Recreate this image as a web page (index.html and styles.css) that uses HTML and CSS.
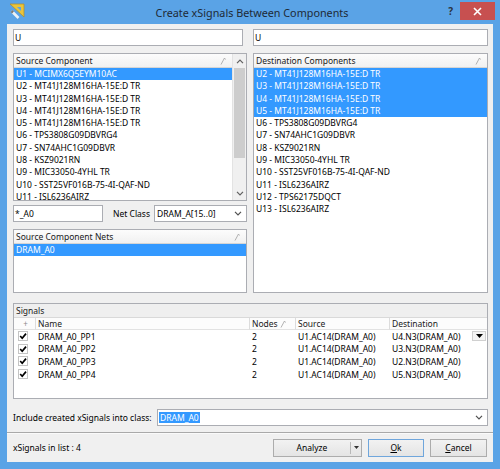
FILE: index.html
```html
<!DOCTYPE html>
<html>
<head>
<meta charset="utf-8">
<link rel="stylesheet" href="styles.css">
</head>
<body>
<div class="window">
  <div class="titlebar">
    <div class="tb-left">
      <svg class="appicon" width="16" height="17" viewBox="0 0 16 17">
        <polygon points="1,1 15,1 15,14" fill="#e9c43c" stroke="#b38c22" stroke-width="0.7"/>
        <polygon points="8,4 12,4 12,8" fill="#5aa3e6"/>
        <line x1="2.5" y1="8" x2="9.5" y2="15" stroke="#eef2f6" stroke-width="2.6"/>
        <line x1="2.5" y1="8" x2="4" y2="9.5" stroke="#7a7a7a" stroke-width="2.6"/>
      </svg>
    </div>
    <div class="title">Create xSignals Between Components</div>
    <div class="tb-right">
      <span class="help">?</span>
      <span class="close">
        <svg width="9" height="9" viewBox="0 0 9 9"><path d="M1 1 L8 8 M8 1 L1 8" stroke="#fff" stroke-width="1.6"/></svg>
      </span>
    </div>
  </div>
  <div class="client">
    <div class="main">
      <div class="toprow">
        <div class="edit">U</div>
        <div class="edit">U</div>
      </div>
      <div class="panels">
        <div class="leftcol">
          <div class="listbox src">
            <div class="lb-main">
              <div class="lb-hdr"><span>Source Component</span><svg class="sort" width="6" height="8" viewBox="0 0 6 8"><path d="M1 7.5 L4.5 1 L5.5 2.5" stroke="#a8a8a8" stroke-width="0.9" fill="none"/></svg></div>
              <div class="lb-rows">
                <div class="row sel">U1 - MCIMX6Q5EYM10AC</div>
                <div class="row">U2 - MT41J128M16HA-15E:D TR</div>
                <div class="row">U3 - MT41J128M16HA-15E:D TR</div>
                <div class="row">U4 - MT41J128M16HA-15E:D TR</div>
                <div class="row">U5 - MT41J128M16HA-15E:D TR</div>
                <div class="row">U6 - TPS3808G09DBVRG4</div>
                <div class="row">U7 - SN74AHC1G09DBVR</div>
                <div class="row">U8 - KSZ9021RN</div>
                <div class="row">U9 - MIC33050-4YHL TR</div>
                <div class="row">U10 - SST25VF016B-75-4I-QAF-ND</div>
                <div class="row">U11 - ISL6236AIRZ</div>
              </div>
            </div>
            <div class="vscroll">
              <div class="sb-btn"><svg width="8" height="5" viewBox="0 0 8 5"><path d="M1 4.2 L4 1.2 L7 4.2" stroke="#606060" stroke-width="1.2" fill="none"/></svg></div>
              <div class="sb-thumb"></div>
              <div class="sb-track"></div>
              <div class="sb-btn"><svg width="8" height="5" viewBox="0 0 8 5"><path d="M1 0.8 L4 3.8 L7 0.8" stroke="#606060" stroke-width="1.2" fill="none"/></svg></div>
            </div>
          </div>
          <div class="filterrow">
            <div class="edit filter">*_A0</div>
            <span class="lbl">Net Class</span>
            <div class="combo nc"><span>DRAM_A[15..0]</span><svg width="8" height="5" viewBox="0 0 8 5"><path d="M1 0.8 L4 3.8 L7 0.8" stroke="#505050" stroke-width="1.2" fill="none"/></svg></div>
          </div>
          <div class="listbox nets">
            <div class="lb-main">
              <div class="lb-hdr"><span>Source Component Nets</span><svg class="sort" width="6" height="8" viewBox="0 0 6 8"><path d="M1 7.5 L4.5 1 L5.5 2.5" stroke="#a8a8a8" stroke-width="0.9" fill="none"/></svg></div>
              <div class="lb-rows">
                <div class="row sel">DRAM_A0</div>
              </div>
            </div>
          </div>
        </div>
        <div class="listbox dest">
          <div class="lb-main">
            <div class="lb-hdr"><span>Destination Components</span><svg class="sort" width="6" height="8" viewBox="0 0 6 8"><path d="M1 7.5 L4.5 1 L5.5 2.5" stroke="#a8a8a8" stroke-width="0.9" fill="none"/></svg></div>
            <div class="lb-rows">
              <div class="row sel">U2 - MT41J128M16HA-15E:D TR</div>
              <div class="row sel">U3 - MT41J128M16HA-15E:D TR</div>
              <div class="row sel">U4 - MT41J128M16HA-15E:D TR</div>
              <div class="row sel">U5 - MT41J128M16HA-15E:D TR</div>
              <div class="row">U6 - TPS3808G09DBVRG4</div>
              <div class="row">U7 - SN74AHC1G09DBVR</div>
              <div class="row">U8 - KSZ9021RN</div>
              <div class="row">U9 - MIC33050-4YHL TR</div>
              <div class="row">U10 - SST25VF016B-75-4I-QAF-ND</div>
              <div class="row">U11 - ISL6236AIRZ</div>
              <div class="row">U12 - TPS62175DQCT</div>
              <div class="row">U13 - ISL6236AIRZ</div>
            </div>
          </div>
        </div>
      </div>
      <div class="signals">
        <div class="sg-title">Signals</div>
        <div class="sg-table">
          <div class="th c-chk">+</div>
          <div class="th">Name</div>
          <div class="th"><span>Nodes</span><svg class="sort" width="6" height="8" viewBox="0 0 6 8"><path d="M1 7.5 L4.5 1 L5.5 2.5" stroke="#a8a8a8" stroke-width="0.9" fill="none"/></svg></div>
          <div class="th">Source</div>
          <div class="th">Destination</div>

          <div class="td c-chk"><svg class="chk" width="10" height="10" viewBox="0 0 10 10"><rect x="0.5" y="0.5" width="9" height="9" fill="#fff" stroke="#c4c4c4"/><path d="M2.2 5 L4.2 7.2 L8 2.6" stroke="#000" stroke-width="1.7" fill="none"/></svg></div>
          <div class="td">DRAM_A0_PP1</div>
          <div class="td">2</div>
          <div class="td">U1.AC14(DRAM_A0)</div>
          <div class="td dd"><span>U4.N3(DRAM_A0)</span><span class="ddbtn"><svg width="7" height="4" viewBox="0 0 7 4"><path d="M0 0 L7 0 L3.5 4 Z" fill="#000"/></svg></span></div>

          <div class="td c-chk"><svg class="chk" width="10" height="10" viewBox="0 0 10 10"><rect x="0.5" y="0.5" width="9" height="9" fill="#fff" stroke="#c4c4c4"/><path d="M2.2 5 L4.2 7.2 L8 2.6" stroke="#000" stroke-width="1.7" fill="none"/></svg></div>
          <div class="td">DRAM_A0_PP2</div>
          <div class="td">2</div>
          <div class="td">U1.AC14(DRAM_A0)</div>
          <div class="td">U3.N3(DRAM_A0)</div>

          <div class="td c-chk"><svg class="chk" width="10" height="10" viewBox="0 0 10 10"><rect x="0.5" y="0.5" width="9" height="9" fill="#fff" stroke="#c4c4c4"/><path d="M2.2 5 L4.2 7.2 L8 2.6" stroke="#000" stroke-width="1.7" fill="none"/></svg></div>
          <div class="td">DRAM_A0_PP3</div>
          <div class="td">2</div>
          <div class="td">U1.AC14(DRAM_A0)</div>
          <div class="td">U2.N3(DRAM_A0)</div>

          <div class="td c-chk"><svg class="chk" width="10" height="10" viewBox="0 0 10 10"><rect x="0.5" y="0.5" width="9" height="9" fill="#fff" stroke="#c4c4c4"/><path d="M2.2 5 L4.2 7.2 L8 2.6" stroke="#000" stroke-width="1.7" fill="none"/></svg></div>
          <div class="td">DRAM_A0_PP4</div>
          <div class="td">2</div>
          <div class="td">U1.AC14(DRAM_A0)</div>
          <div class="td">U5.N3(DRAM_A0)</div>
        </div>
      </div>
      <div class="includerow">
        <span class="lbl">Include created xSignals into class:</span>
        <div class="combo inc"><span class="hl">DRAM_A0</span><svg width="8" height="5" viewBox="0 0 8 5"><path d="M1 0.8 L4 3.8 L7 0.8" stroke="#505050" stroke-width="1.2" fill="none"/></svg></div>
      </div>
    </div>
    <div class="footer">
      <span class="count">xSignals in list : 4</span>
      <div class="buttons">
        <div class="btn split"><span class="btn-main">Analyze</span><span class="btn-arrow"><svg width="5" height="3" viewBox="0 0 5 3"><path d="M0 0 L5 0 L2.5 3 Z" fill="#333"/></svg></span></div>
        <div class="btn ok"><span><u>O</u>k</span></div>
        <div class="btn cancel"><span><u>C</u>ancel</span></div>
      </div>
    </div>
  </div>
</div>
</body>
</html>
```
FILE: styles.css
```css
* { box-sizing: border-box; }
html, body { margin: 0; padding: 0; }
body {
  width: 500px;
  height: 469px;
  overflow: hidden;
  font-family: "Noto Sans", "Open Sans", sans-serif;
  font-size: 8.5px;
  color: #000;
  background: #5aa3e6;
}
.window {
  width: 500px;
  height: 469px;
  background: #5aa3e6;
  display: flex;
  flex-direction: column;
}
.titlebar {
  height: 24px;
  display: grid;
  grid-template-columns: 1fr auto 1fr;
  align-items: center;
  padding: 0 5px 0 9px;
}
.tb-left { display: flex; align-items: center; }
.appicon { display: block; margin-top: -2px; }
.title {
  font-size: 10.8px;
  color: #1e2a36;
  white-space: nowrap;
  padding-top: 1px;
}
.tb-right {
  justify-self: end;
  align-self: start;
  display: flex;
  align-items: flex-start;
}
.help {
  font-size: 10px;
  font-weight: bold;
  color: #2b3440;
  margin-right: 7px;
  margin-top: 4px;
}
.close {
  width: 35px;
  height: 18px;
  margin-top: 2px;
  background: #c75050;
  display: flex;
  align-items: center;
  justify-content: center;
}
.client {
  margin: 0 7px 7px 7px;
  height: 438px;
  background: #f0f0f0;
  display: flex;
  flex-direction: column;
}
.main {
  padding: 5px 5px 6px 6px;
  display: flex;
  flex-direction: column;
}
.edit {
  height: 17px;
  background: #fff;
  border: 1px solid #abadb3;
  padding-left: 1px;
  line-height: 15px;
  white-space: nowrap;
}
.toprow {
  display: grid;
  grid-template-columns: 230px 235px;
  column-gap: 10px;
}
.panels {
  margin-top: 7px;
  height: 240px;
  display: grid;
  grid-template-columns: 234px 235px;
  column-gap: 6px;
}
.leftcol {
  display: flex;
  flex-direction: column;
}
.listbox {
  border: 1px solid #abadb3;
  background: #fff;
  display: flex;
  overflow: hidden;
}
.listbox.src { height: 148px; }
.listbox.nets { height: 64px; margin-top: 7px; }
.listbox.dest { height: 240px; }
.lb-main {
  flex: 1;
  min-width: 0;
  display: flex;
  flex-direction: column;
  overflow: hidden;
}
.lb-hdr {
  height: 14px;
  flex: none;
  background: linear-gradient(#fcfcfc, #f1f1f1);
  border-bottom: 1px solid #d5d5d5;
  display: flex;
  align-items: center;
  justify-content: space-between;
  padding: 0 6px 0 2px;
  color: #1a1a1a;
}
.sort { display: block; }
.lb-rows { overflow: hidden; flex: 1; min-height: 0; }
.row {
  height: 12.3px;
  line-height: 12.3px;
  padding-left: 2px;
  white-space: nowrap;
  color: #000;
}
.row.sel {
  background: #3399ff;
  color: #fff;
}
.vscroll {
  width: 14px;
  flex: none;
  display: flex;
  flex-direction: column;
  background: #f0f0f0;
  border-left: 1px solid #e3e3e3;
}
.sb-btn {
  height: 14px;
  flex: none;
  display: flex;
  align-items: center;
  justify-content: center;
  background: #f0f0f0;
}
.sb-thumb {
  height: 90px;
  background: #cdcdcd;
  margin: 0 1px;
}
.sb-track {
  flex: 1;
  background: #f0f0f0;
}
.filterrow {
  margin-top: 4px;
  height: 17px;
  display: flex;
  align-items: center;
}
.edit.filter { width: 90px; }
.lbl { white-space: nowrap; color: #000; }
.filterrow .lbl { margin-left: 10px; }
.combo {
  height: 17px;
  background: #fff;
  border: 1px solid #abadb3;
  display: flex;
  align-items: center;
  justify-content: space-between;
  padding: 0 4px 0 2px;
  white-space: nowrap;
}
.combo.nc { width: 93px; margin-left: auto; }
.signals {
  margin-top: 10px;
  height: 96px;
  border: 1px solid #abadb3;
  background: #fff;
  display: flex;
  flex-direction: column;
}
.sg-title {
  height: 14px;
  flex: none;
  background: #efefef;
  border-bottom: 1px solid #d9d9d9;
  padding-left: 2px;
  line-height: 13px;
  color: #1a1a1a;
}
.sg-table {
  display: grid;
  grid-template-columns: 21px 214px 46px 94px 1fr;
  grid-auto-rows: 12.6px;
  grid-template-rows: 12px;
}
.th {
  background: #fcfcfc;
  border-bottom: 1px solid #e2e2e2;
  border-left: 1px solid #dcdcdc;
  padding-left: 2px;
  line-height: 11px;
  color: #1a1a1a;
  display: flex;
  align-items: center;
  white-space: nowrap;
}
.th:nth-child(3) { justify-content: space-between; padding-right: 9px; }
.th.c-chk {
  border-left: none;
  justify-content: center;
  color: #8a8a8a;
  font-size: 8px;
}
.td {
  padding-left: 3px;
  display: flex;
  align-items: center;
  white-space: nowrap;
}
.td.c-chk { padding-left: 4px; }
.chk { display: block; }
.td.dd { justify-content: space-between; padding-right: 0; }
.ddbtn {
  width: 14px;
  height: 10px;
  background: #f4f4f4;
  border: 1px solid #d0d0d0;
  display: flex;
  align-items: center;
  justify-content: center;
  margin-right: 1px;
}
.includerow {
  margin-top: 10px;
  height: 17px;
  display: flex;
  align-items: center;
  justify-content: space-between;
}
.combo.inc { width: 331px; padding-left: 1px; }
.hl {
  background: #3399ff;
  color: #fff;
  padding: 0 1px;
  line-height: 11px;
}
.footer {
  flex: 1;
  border-top: 1px solid #a9a9a9;
  box-shadow: inset 0 1px 0 #fafafa;
  display: flex;
  align-items: center;
  justify-content: space-between;
  padding: 0 6px 0 6px;
}
.count { color: #000; }
.buttons {
  display: flex;
  column-gap: 6px;
}
.btn {
  height: 18px;
  border: 1px solid #acacac;
  background: linear-gradient(#f2f2f2, #e4e4e4);
  display: flex;
  align-items: center;
  justify-content: center;
  color: #000;
}
.btn.split { width: 89px; justify-content: flex-start; }
.btn-main {
  width: 77px;
  text-align: center;
  border-right: 1px solid #b8b8b8;
  line-height: 12px;
}
.btn-arrow {
  flex: 1;
  display: flex;
  justify-content: center;
}
.btn.ok { width: 56px; border-color: #6fa6dc; }
.btn.cancel { width: 57px; }
```
